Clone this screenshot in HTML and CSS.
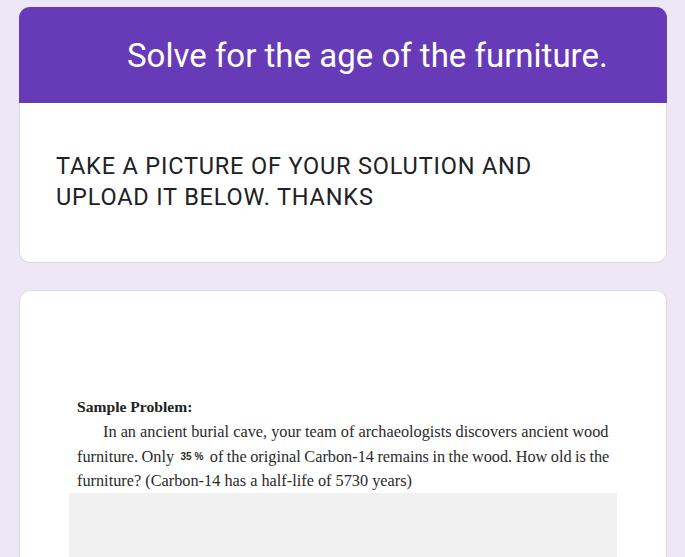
FILE: index.html
```html
<!DOCTYPE html>
<html>
<head>
<meta charset="utf-8">
<link rel="stylesheet" href="styles.css">
</head>
<body>
<div class="page">
  <div class="header">
    <h1 class="title">Solve for the age of the furniture.</h1>
  </div>
  <div class="desc-card">
    <p class="desc">TAKE A PICTURE OF YOUR SOLUTION AND<br>UPLOAD IT BELOW. THANKS</p>
  </div>
  <div class="q-card">
    <div class="figure">
      <div class="sp-title">Sample Problem:</div>
      <p class="sp-text"><span class="indent">In an ancient burial cave, your team of archaeologists discovers ancient wood</span><br><span class="tight">furniture. Only <span class="pct">35 %</span> of the original Carbon-14 remains in the wood. How old is the</span><br>furniture? (Carbon-14 has a half-life of 5730 years)</p>
      <div class="blank"></div>
    </div>
  </div>
</div>
</body>
</html>
```
FILE: styles.css
```css
html, body {
  margin: 0;
  padding: 0;
  background: #ede7f6;
  height: 100%;
  overflow: hidden;
}
.page {
  width: 648px;
  margin-left: 19px;
  padding-top: 7px;
  display: flex;
  flex-direction: column;
}
.header {
  background: #673ab7;
  height: 96px;
  border-radius: 11px 11px 0 0;
  display: flex;
  align-items: center;
  padding-left: 108px;
  box-sizing: border-box;
}
.title {
  margin: 0;
  font-family: Roboto, "Open Sans", sans-serif;
  font-weight: 400;
  font-size: 33px;
  color: #ffffff;
  letter-spacing: 0;
  white-space: nowrap;
}
.desc-card {
  background: #ffffff;
  height: 160px;
  box-sizing: border-box;
  border: 1px solid #dadce0;
  border-top: none;
  border-radius: 0 0 11px 11px;
  display: flex;
  align-items: center;
  padding-left: 36px;
}
.desc {
  margin: 0;
  font-family: Roboto, "Liberation Sans", sans-serif;
  font-size: 23.5px;
  line-height: 31px;
  letter-spacing: 0.82px;
  color: #202124;
  padding-bottom: 2px;
  white-space: nowrap;
}
.q-card {
  margin-top: 27px;
  background: #ffffff;
  height: 300px;
  box-sizing: border-box;
  border: 1px solid #dadce0;
  border-radius: 11px;
}
.figure {
  padding: 106px 0 0 49px;
  width: 548px;
}
.sp-title {
  font-family: "Liberation Serif", serif;
  font-weight: 700;
  font-size: 15.6px;
  color: #222;
  margin-left: 8px;
  line-height: 20px;
}
.sp-text {
  margin: 3px 0 0 8px;
  font-family: "Liberation Serif", serif;
  font-size: 16.3px;
  line-height: 24.5px;
  color: #2a2a2a;
  white-space: nowrap;
}
.indent {
  padding-left: 26px;
}
.tight {
  word-spacing: -0.6px;
}
.pct {
  font-family: "Liberation Sans", sans-serif;
  font-size: 10px;
  font-weight: 700;
  margin: 0 3px;
  vertical-align: 2px;
  word-spacing: 0;
}
.blank {
  margin-top: -1px;
  height: 80px;
  background: #f1f1f1;
}
```
